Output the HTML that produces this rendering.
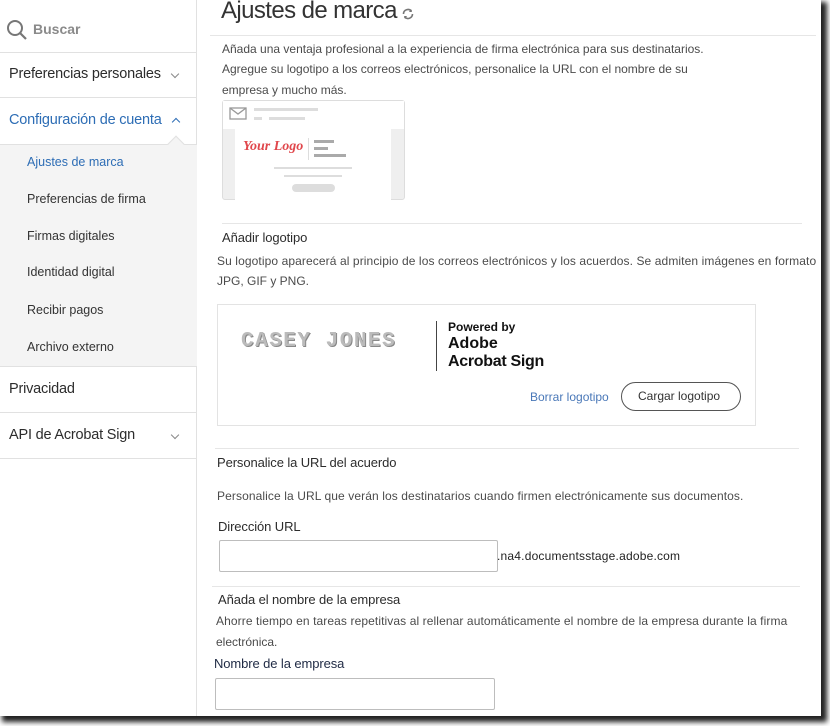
<!DOCTYPE html>
<html><head><meta charset="utf-8"><style>
*{margin:0;padding:0;box-sizing:border-box}
body{width:830px;height:726px;background:#fff;font-family:"Liberation Sans",sans-serif;color:#2c2c2c;position:relative;overflow:hidden}
#frame{position:absolute;left:0;top:0;width:821px;height:716px;background:#fff;box-shadow:4px 4px 5px 2px #222;overflow:hidden}
.a{position:absolute;white-space:nowrap}
.t{font-size:12px;letter-spacing:0;color:#4b4b4b}
.h{font-size:13px;letter-spacing:-0.1px;color:#2c2c2c}
.hr{position:absolute;height:1px;background:#e6e6e6}
#side{position:absolute;left:0;top:0;width:197px;height:716px;border-right:1px solid #e1e1e1}
.sl{position:absolute;left:0;width:197px;height:1px;background:#e1e1e1}
.nav{font-size:14.5px;color:#2c2c2c;left:9px;letter-spacing:-0.2px}
.sub{font-size:12.5px;color:#333;left:27px}
.chev{position:absolute;width:6px;height:6px;border-right:1.5px solid #888;border-bottom:1.5px solid #888;transform:rotate(45deg)}
input{position:absolute;border:1px solid #bdbdbd;border-radius:2px;background:#fff}
</style></head><body>
<div id="frame">
<div id="side">
  <svg class="a" style="left:6px;top:19px" width="22" height="22" viewBox="0 0 22 22"><circle cx="9" cy="9" r="7" fill="none" stroke="#777" stroke-width="2"/><line x1="14" y1="14" x2="20" y2="20" stroke="#777" stroke-width="2.2"/></svg>
  <div class="a" style="left:33px;top:21px;font-size:14px;color:#8a8a8a;font-weight:bold">Buscar</div>
  <div class="sl" style="top:52px"></div>
  <div class="a nav" style="top:66px">Preferencias personales</div>
  <div class="chev" style="left:172px;top:71px"></div>
  <div class="sl" style="top:97px"></div>
  <div class="a nav" style="top:112px;color:#2d6db5">Configuración de cuenta</div>
  <div class="chev" style="left:173px;top:119px;border-color:#2d6db5;transform:rotate(225deg)"></div>
  <div style="position:absolute;left:0;top:144px;width:197px;height:222px;background:#f4f4f4;border-top:1px solid #e1e1e1"></div>
  <div style="position:absolute;left:170px;top:138px;width:12px;height:12px;background:#f4f4f4;border-left:1px solid #e1e1e1;border-top:1px solid #e1e1e1;transform:rotate(45deg)"></div>
  <div class="a sub" style="top:155px;color:#2d6db5">Ajustes de marca</div>
  <div class="a sub" style="top:192px">Preferencias de firma</div>
  <div class="a sub" style="top:229px">Firmas digitales</div>
  <div class="a sub" style="top:265px">Identidad digital</div>
  <div class="a sub" style="top:303px">Recibir pagos</div>
  <div class="a sub" style="top:340px">Archivo externo</div>
  <div class="sl" style="top:366px"></div>
  <div class="a nav" style="top:381px">Privacidad</div>
  <div class="sl" style="top:412px"></div>
  <div class="a nav" style="top:427px">API de Acrobat Sign</div>
  <div class="chev" style="left:172px;top:432px"></div>
  <div class="sl" style="top:458px"></div>
</div>

<div class="a" style="left:221px;top:-3px;font-size:24px;color:#333;letter-spacing:-0.6px">Ajustes de marca</div>
<svg class="a" style="left:401px;top:7px" width="14" height="14" viewBox="0 0 14 14"><path d="M2.5 7a4.5 4.5 0 0 1 8-2.8M11.5 7a4.5 4.5 0 0 1-8 2.8" fill="none" stroke="#777" stroke-width="1.6"/><path d="M10 2l1 3-3 0z M4 12l-1-3 3 0z" fill="#777"/></svg>
<div class="hr" style="left:210px;top:35px;width:606px"></div>
<div class="a t" style="left:222px;top:42px">Añada una ventaja profesional a la experiencia de firma electrónica para sus destinatarios.</div>
<div class="a t" style="left:222px;top:62px">Agregue su logotipo a los correos electrónicos, personalice la URL con el nombre de su</div>
<div class="a t" style="left:222px;top:83px">empresa y mucho más.</div>

<div style="position:absolute;left:222px;top:100px;width:183px;height:100px;border:1px solid #ddd;border-radius:3px;background:#efefef"></div>
<div style="position:absolute;left:223px;top:101px;width:181px;height:28px;background:#fff"></div>
<svg class="a" style="left:229px;top:107px" width="18" height="13" viewBox="0 0 18 13"><rect x="1" y="1" width="16" height="11" fill="none" stroke="#999" stroke-width="1.3"/><path d="M1 1l8 6 8-6" fill="none" stroke="#999" stroke-width="1.3"/></svg>
<div style="position:absolute;left:254px;top:108px;width:64px;height:3px;background:#ddd"></div>
<div style="position:absolute;left:254px;top:117px;width:8px;height:3px;background:#ddd"></div>
<div style="position:absolute;left:269px;top:117px;width:36px;height:3px;background:#ddd"></div>
<div style="position:absolute;left:235px;top:129px;width:156px;height:71px;background:#fff"></div>
<div class="a" style="left:243px;top:139px;font-family:'Liberation Serif',serif;font-style:italic;font-weight:bold;color:#e0474c;font-size:14px">Your Logo</div>
<div style="position:absolute;left:308px;top:138px;width:1px;height:22px;background:#ddd"></div>
<div style="position:absolute;left:314px;top:140px;width:20px;height:3px;background:#aaa"></div>
<div style="position:absolute;left:314px;top:147px;width:14px;height:3px;background:#aaa"></div>
<div style="position:absolute;left:314px;top:154px;width:32px;height:3px;background:#aaa"></div>
<div style="position:absolute;left:274px;top:167px;width:78px;height:2px;background:#ddd"></div>
<div style="position:absolute;left:284px;top:175px;width:58px;height:2px;background:#ddd"></div>
<div style="position:absolute;left:292px;top:184px;width:43px;height:8px;border-radius:4px;background:#ddd"></div>

<div class="hr" style="left:222px;top:223px;width:580px"></div>
<div class="a h" style="left:222px;top:230px">Añadir logotipo</div>
<div class="a t" style="left:217px;top:254px;letter-spacing:0.1px">Su logotipo aparecerá al principio de los correos electrónicos y los acuerdos. Se admiten imágenes en formato</div>
<div class="a t" style="left:217px;top:274px">JPG, GIF y PNG.</div>

<div style="position:absolute;left:217px;top:304px;width:539px;height:122px;border:1px solid #e3e3e3"></div>
<div class="a" style="left:241px;top:330px;font-family:'Liberation Mono',monospace;font-weight:bold;font-size:21px;color:#bbb;letter-spacing:1.5px;text-shadow:1px 1px 0 #888">CASEY JONES</div>
<div style="position:absolute;left:436px;top:321px;width:1px;height:50px;background:#444"></div>
<div class="a" style="left:448px;top:320px;font-size:12px;font-weight:bold;color:#111">Powered by</div>
<div class="a" style="left:448px;top:335px;font-size:16px;font-weight:bold;color:#111">Adobe</div>
<div class="a" style="left:448px;top:353px;font-size:16px;font-weight:bold;color:#111;letter-spacing:-0.3px">Acrobat Sign</div>
<div class="a t" style="left:530px;top:390px;color:#4a78b8">Borrar logotipo</div>
<div style="position:absolute;left:621px;top:382px;width:120px;height:29px;border:1.5px solid #555;border-radius:15px"></div>
<div class="a t" style="left:638px;top:389px;color:#333">Cargar logotipo</div>

<div class="hr" style="left:215px;top:448px;width:584px"></div>
<div class="a h" style="left:217px;top:455px">Personalice la URL del acuerdo</div>
<div class="a t" style="left:217px;top:489px;letter-spacing:0.1px">Personalice la URL que verán los destinatarios cuando firmen electrónicamente sus documentos.</div>
<div class="a h" style="left:218px;top:519px">Dirección URL</div>
<input style="left:219px;top:540px;width:279px;height:32px">
<div class="a t" style="left:497px;top:549px;color:#222;letter-spacing:0.2px">.na4.documentsstage.adobe.com</div>

<div class="hr" style="left:212px;top:586px;width:588px"></div>
<div class="a h" style="left:218px;top:592px">Añada el nombre de la empresa</div>
<div class="a t" style="left:216px;top:614px;letter-spacing:0.1px">Ahorre tiempo en tareas repetitivas al rellenar automáticamente el nombre de la empresa durante la firma</div>
<div class="a t" style="left:216px;top:635px">electrónica.</div>
<div class="a h" style="left:214px;top:656px;color:#1f2a44">Nombre de la empresa</div>
<input style="left:215px;top:678px;width:280px;height:32px">
</div>
</body></html>
